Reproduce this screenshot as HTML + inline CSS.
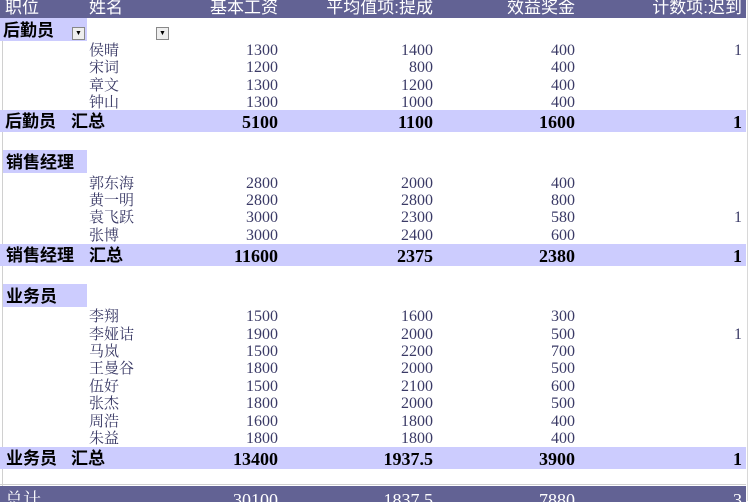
<!DOCTYPE html>
<html><head><meta charset="utf-8"><style>
body{margin:0;width:750px;height:501px;background:#fff;overflow:hidden;position:relative;font-family:"Liberation Serif","Noto Serif CJK SC",serif;}
.r{position:absolute;left:0;width:746px;height:18px;line-height:20px;font-size:16px;color:#3a3a66;}
.r span{position:absolute;top:0;white-space:nowrap;}
.n{left:89px;font-size:15px}
.a{right:468px}.b{right:313px}.c{right:171px}.d{right:4px}
.hd{background:#626294;color:#fff;font-size:17px;height:18px;line-height:16px;top:0;font-family:"Liberation Sans","Noto Sans CJK SC",sans-serif;}
.sub{background:#ccccfe;color:#000;font-weight:bold;font-size:18px;height:22px;line-height:24px;font-family:"Liberation Serif","Noto Serif CJK SC",serif;}
.sub .l{font-size:17px;font-family:"Liberation Sans","Noto Sans CJK SC",sans-serif;}
.tot{background:#626294;color:#fff;font-size:18px;height:16px;line-height:28px;top:486px;overflow:hidden;}
.lab{position:absolute;left:3px;width:84px;height:23px;line-height:25px;background:#ccccfe;font-weight:bold;font-size:17px;color:#000;padding-left:3px;box-sizing:border-box;font-family:"Liberation Sans","Noto Sans CJK SC",sans-serif;}
.dd{position:absolute;width:11px;height:11px;border:1px solid #888;background:#eee;top:27px;font-size:7px;line-height:11px;text-align:center;color:#000;}
.gl{position:absolute;left:747px;width:3px;top:0;height:501px;background:#fff;border-left:1px solid #d8d8d8;}
.ll{position:absolute;left:2px;top:18px;height:468px;width:1px;background:#d0d0d0}
</style></head><body>
<div class="ll"></div>
<div class="gl"></div>
<div class="r hd"><span style="left:5px">职位</span><span class="n" style="font-size:17px">姓名</span><span class="a">基本工资</span><span class="b">平均值项:提成</span><span class="c">效益奖金</span><span class="d">计数项:迟到</span></div>

<div class="lab" style="top:18px;left:0;width:87px;">后勤员</div>
<div class="dd" style="left:72px">▼</div>
<div class="dd" style="left:156px">▼</div>
<div class="r" style="top:41px"><span class="n">侯晴</span><span class="a">1300</span><span class="b">1400</span><span class="c">400</span><span class="d">1</span></div>
<div class="r" style="top:58px"><span class="n">宋词</span><span class="a">1200</span><span class="b">800</span><span class="c">400</span></div>
<div class="r" style="top:76px"><span class="n">章文</span><span class="a">1300</span><span class="b">1200</span><span class="c">400</span></div>
<div class="r" style="top:93px"><span class="n">钟山</span><span class="a">1300</span><span class="b">1000</span><span class="c">400</span></div>
<div class="r sub" style="top:110px"><span class="l" style="left:5px">后勤员</span><span class="l" style="left:71px">汇总</span><span class="a">5100</span><span class="b">1100</span><span class="c">1600</span><span class="d">1</span></div>

<div class="lab" style="top:150px">销售经理</div>
<div class="r" style="top:174px"><span class="n">郭东海</span><span class="a">2800</span><span class="b">2000</span><span class="c">400</span></div>
<div class="r" style="top:191px"><span class="n">黄一明</span><span class="a">2800</span><span class="b">2800</span><span class="c">800</span></div>
<div class="r" style="top:208px"><span class="n">袁飞跃</span><span class="a">3000</span><span class="b">2300</span><span class="c">580</span><span class="d">1</span></div>
<div class="r" style="top:226px"><span class="n">张博</span><span class="a">3000</span><span class="b">2400</span><span class="c">600</span></div>
<div class="r sub" style="top:244px"><span class="l" style="left:6px">销售经理</span><span class="l" style="left:89px">汇总</span><span class="a">11600</span><span class="b">2375</span><span class="c">2380</span><span class="d">1</span></div>

<div class="lab" style="top:284px">业务员</div>
<div class="r" style="top:307px"><span class="n">李翔</span><span class="a">1500</span><span class="b">1600</span><span class="c">300</span></div>
<div class="r" style="top:325px"><span class="n">李娅诘</span><span class="a">1900</span><span class="b">2000</span><span class="c">500</span><span class="d">1</span></div>
<div class="r" style="top:342px"><span class="n">马岚</span><span class="a">1500</span><span class="b">2200</span><span class="c">700</span></div>
<div class="r" style="top:359px"><span class="n">王曼谷</span><span class="a">1800</span><span class="b">2000</span><span class="c">500</span></div>
<div class="r" style="top:377px"><span class="n">伍好</span><span class="a">1500</span><span class="b">2100</span><span class="c">600</span></div>
<div class="r" style="top:394px"><span class="n">张杰</span><span class="a">1800</span><span class="b">2000</span><span class="c">500</span></div>
<div class="r" style="top:412px"><span class="n">周浩</span><span class="a">1600</span><span class="b">1800</span><span class="c">400</span></div>
<div class="r" style="top:429px"><span class="n">朱益</span><span class="a">1800</span><span class="b">1800</span><span class="c">400</span></div>
<div class="r sub" style="top:447px"><span class="l" style="left:6px">业务员</span><span class="l" style="left:71px">汇总</span><span class="a">13400</span><span class="b">1937.5</span><span class="c">3900</span><span class="d">1</span></div>

<div style="position:absolute;left:0;top:484px;width:746px;height:1px;background:#d0d0d0"></div>
<div class="r tot"><span style="left:5px">总计</span><span class="a">30100</span><span class="b">1837.5</span><span class="c">7880</span><span class="d">3</span></div>
</body></html>
